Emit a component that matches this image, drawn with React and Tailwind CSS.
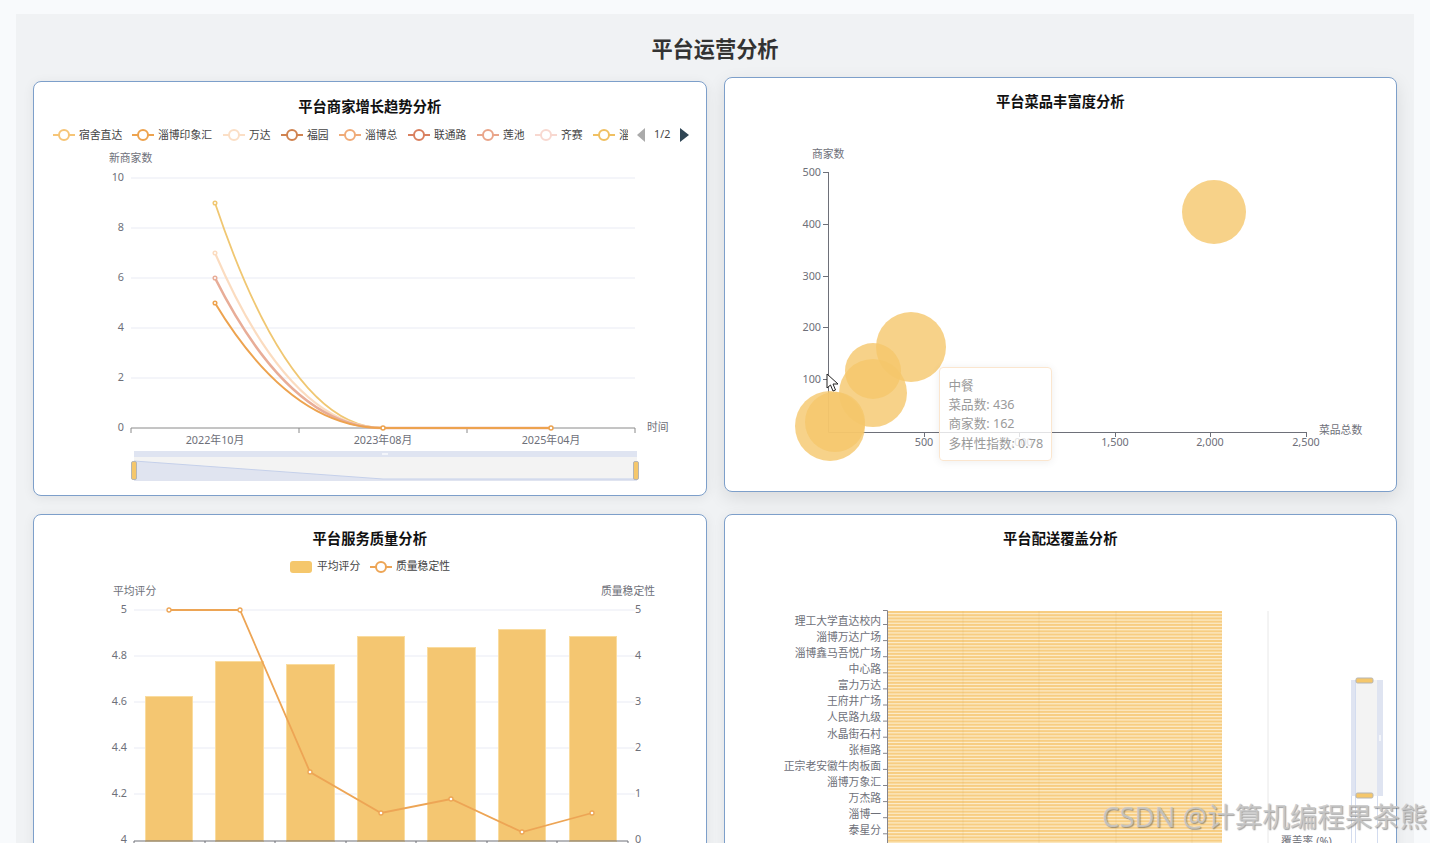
import React from "react";

const axisText = "fill-[#6e7079] text-[10.8px]";

function T({ x, y, a = "start", c = axisText, children }) {
  return (
    <text x={x} y={y - 0.7} textAnchor={a} dominantBaseline="central" className={c}>
      {children}
    </text>
  );
}

function Card({ title, className = "", titleClass = "pt-[14px]", children }) {
  return (
    <section
      className={
        "relative h-[415px] flex flex-col rounded-lg border border-[#7d9fca] bg-white shadow-[0_2px_12px_rgba(0,0,0,0.07)] " +
        className
      }
    >
      <h2 className={"h-[40px] shrink-0 text-center text-[14.3px] leading-[20px] font-bold text-[#111] " + titleClass}>
        {title}
      </h2>
      {children}
    </section>
  );
}

function LegendLine({ x, y, color, width = 2 }) {
  return (
    <g fill="none" stroke={color} strokeWidth={width}>
      <path d={`M${x} ${y}H${x + 6}M${x + 16} ${y}H${x + 22}`} />
      <circle cx={x + 11} cy={y} r="5" fill="#fff" />
    </g>
  );
}

const legend = [
  [53, "宿舍直达", "#f6c577"],
  [132, "淄博印象汇", "#eda34f"],
  [223, "万达", "#fbdfc6"],
  [281, "福园", "#d08350"],
  [339, "淄博总", "#f0ab78"],
  [408, "联通路", "#d9805f"],
  [477, "莲池", "#e9a58a"],
  [535, "齐赛", "#f8d8d0"],
];

const trend = [
  [203, "#f0c772", 1.8],
  [253, "#fbdcc0", 2.2],
  [278, "#e8ad98", 2.6],
  [303, "#eda34f", 2],
];

function TrendChart() {
  const ys = [[10, 178], [8, 228], [6, 278], [4, 328], [2, 378], [0, 428]];
  return (
    <svg viewBox="34 122 672 373" className="block w-[672px] h-[373px]">
      <defs>
        <clipPath id="legendClip">
          <rect x="590" y="125" width="38" height="20" />
        </clipPath>
      </defs>
      {legend.map(([x, label, color]) => (
        <g key={label}>
          <LegendLine x={x} y={135} color={color} />
          <T x={x + 26} y={135} c="fill-[#444] text-[10.8px]">{label}</T>
        </g>
      ))}
      <g clipPath="url(#legendClip)">
        <LegendLine x={593} y={135} color="#f0c062" />
        <T x={619} y={135} c="fill-[#444] text-[10.8px]">淄博</T>
      </g>
      <path d="M645 128V142L637 135Z" fill="#aaa" />
      <T x={654} y={134.5} c="fill-[#444] text-[10.8px]">1/2</T>
      <path d="M680 128V142L689 135Z" fill="#2f4554" />
      <T x={109} y={158}>新商家数</T>
      {ys.map(([v, y]) => (
        <g key={v}>
          {v > 0 && <path d={`M131 ${y}H635`} stroke="#e9ebf4" />}
          <T x={124} y={y - 1} a="end">{v}</T>
        </g>
      ))}
      <path d="M131 433V428H635V433M299 428V433M467 428V433" fill="none" stroke="#8a8a8a" />
      {[[215, "2022年10月"], [383, "2023年08月"], [551, "2025年04月"]].map(([x, l]) => (
        <T key={l} x={x} y={440} a="middle">{l}</T>
      ))}
      <T x={647} y={427}>时间</T>
      {trend.map(([y, color, w]) => (
        <g key={y} fill="none" stroke={color} strokeWidth={w}>
          <path d={`M215 ${y}C255 ${y + (428 - y) * 0.53} 310 428 383 428H551`} />
          <circle cx="215" cy={y} r="1.8" fill="#fff" strokeWidth="1.5" />
        </g>
      ))}
      <path d="M383 428H551" stroke="#eda34f" strokeWidth="2" />
      <circle cx="383" cy="428" r="2" fill="#fff" stroke="#eda34f" strokeWidth="1.5" />
      <circle cx="551" cy="428" r="2" fill="#fff" stroke="#eda34f" strokeWidth="1.5" />
      <rect x="134" y="451" width="503" height="6" fill="#dfe4f1" />
      <rect x="134" y="457" width="503" height="24" fill="#f3f3f3" />
      <path d="M134 461L383 479H637V481H134Z" fill="#e0e4f0" />
      <path d="M134 461L383 479H637" fill="none" stroke="#c5d0ea" />
      <rect x="131.5" y="461.5" width="5" height="18" rx="1.5" fill="#f5c76b" stroke="#b5b5b5" />
      <rect x="633.5" y="461.5" width="5" height="18" rx="1.5" fill="#f5c76b" stroke="#b5b5b5" />
      <rect x="382" y="453" width="6" height="2" fill="#f3f5fa" />
    </svg>
  );
}

function BubbleChart() {
  const bubbles = [
    [1214, 212, 32],
    [911, 347, 35],
    [873, 393, 34],
    [873, 371, 28],
    [830, 426, 35],
    [835, 422, 30],
  ];
  return (
    <svg viewBox="725 118 672 373" className="block w-[672px] h-[373px]">
      <T x={812} y={154}>商家数</T>
      {[[500, 172], [400, 224], [300, 276], [200, 327], [100, 379]].map(([v, y]) => (
        <g key={v}>
          <T x={821} y={y} a="end">{v}</T>
          <path d={`M823 ${y + 0.5}H828`} stroke="#6e7079" />
        </g>
      ))}
      <path d="M828.5 172V432.5H1306" fill="none" stroke="#6e7079" />
      {[[924, "500"], [1019, "1,000"], [1115, "1,500"], [1210, "2,000"], [1306, "2,500"]].map(([x, l]) => (
        <g key={l}>
          <path d={`M${x + 0.5} 432V437`} stroke="#6e7079" />
          <T x={x} y={442} a="middle">{l}</T>
        </g>
      ))}
      <T x={1319} y={430}>菜品总数</T>
      {bubbles.map(([x, y, r]) => (
        <circle key={x + "-" + y} cx={x} cy={y} r={r} fill="#f5c76b" fillOpacity="0.8" />
      ))}
    </svg>
  );
}

function Tooltip() {
  return (
    <div className="absolute left-[214px] top-[289px] h-[94px] w-[113px] rounded border border-[#fbe6cf] bg-white/80 pl-[9px] pt-[8px] text-[12.6px] leading-[19.2px] text-[#9a9a9a] shadow-[0_1px_8px_rgba(0,0,0,0.07)] whitespace-nowrap">
      <div>中餐</div>
      <div>菜品数: 436</div>
      <div>商家数: 162</div>
      <div>多样性指数: 0.78</div>
    </div>
  );
}

function Cursor() {
  return (
    <svg viewBox="0 0 13 20" className="absolute left-[101px] top-[295px] h-[20px] w-[13px]">
      <path d="M1 1V15L4.5 12L7 18L9.5 17L7 11H12Z" fill="#fff" stroke="#222" strokeWidth="1" strokeLinejoin="round" />
    </svg>
  );
}

function QualityChart() {
  const bars = [
    [145, 48, 696], [215, 49, 661], [286, 49, 664], [357, 48, 636],
    [427, 49, 647], [498, 48, 629], [569, 48, 636],
  ];
  const line = [[169, 610], [240, 610], [310, 772], [381, 813], [451, 799], [522, 832], [592, 813]];
  const rows = [["5", "5", 610], ["4.8", "4", 656], ["4.6", "3", 702], ["4.4", "2", 748], ["4.2", "1", 794], ["4", "0", 840]];
  return (
    <svg viewBox="34 555 672 373" className="block w-[672px] h-[373px]">
      <rect x="290" y="561" width="22" height="12" rx="3" fill="#f5c76c" />
      <T x={317} y={566} c="fill-[#444] text-[10.8px]">平均评分</T>
      <LegendLine x={370} y={567} color="#eda555" />
      <T x={396} y={566} c="fill-[#444] text-[10.8px]">质量稳定性</T>
      <T x={113} y={591}>平均评分</T>
      <T x={655} y={591} a="end">质量稳定性</T>
      {rows.map(([l, r, y]) => (
        <g key={y}>
          {y < 840 && <path d={`M134 ${y}H635`} stroke="#e9ebf4" />}
          <T x={127} y={y - 1} a="end">{l}</T>
          <T x={635} y={y - 1}>{r}</T>
        </g>
      ))}
      {bars.map(([x, w, y]) => (
        <rect key={x} x={x + 0.5} y={y + 0.5} width={w - 1} height={841 - y} fill="#f4c671" stroke="#fadc9f" />
      ))}
      <path d="M134 847V841H628V847M205 841V847M275 841V847M346 841V847M416 841V847M487 841V847M557 841V847" fill="none" stroke="#6e7079" />
      <polyline points={line.map((p) => p.join(",")).join(" ")} fill="none" stroke="#eda555" strokeWidth="1.8" />
      {line.map(([x, y]) => (
        <circle key={x} cx={x} cy={y} r="2" fill="#fff" stroke="#eda555" strokeWidth="1.3" />
      ))}
    </svg>
  );
}

const shops = [
  "理工大学直达校内", "淄博万达广场", "淄博鑫马吾悦广场", "中心路", "富力万达", "王府井广场", "人民路九级",
  "水晶街石村", "张桓路", "正宗老安徽牛肉板面", "淄博万象汇", "万杰路", "淄博一", "泰星分",
];

function CoverageChart() {
  const stripes = Array.from({ length: 73 }, (_, i) => 611 + i * 3.22);
  return (
    <svg viewBox="725 555 672 373" className="block w-[672px] h-[373px]">
      {[1268].map((x) => (
        <path key={x} d={`M${x} 611V843`} stroke="#e8e8e8" />
      ))}
      <rect x="888" y="611" width="334" height="232" fill="#fcebc8" />
      {stripes.map((y) => (
        <rect key={y} x="888" y={y} width="334" height="2" fill="#f7cd82" />
      ))}
      {[963, 1039, 1116, 1192].map((x) => (
        <path key={x} d={`M${x} 611V843`} stroke="#d9a85a" strokeOpacity="0.18" />
      ))}
      <path d="M883 610.5H887.5V843" fill="none" stroke="#85858c" />
      {shops.map((s, i) => {
        const y = 621 + i * 16.1;
        return (
          <g key={s}>
            <T x={881} y={y} a="end">{s}</T>
            <path d={`M883 ${y + 3.5}H887`} stroke="#85858c" />
          </g>
        );
      })}
      <rect x="1351" y="680" width="32" height="116" fill="#dfe4f1" />
      <rect x="1356" y="680" width="21" height="116" fill="#f3f3f3" />
      <path d="M1355.5 680V843M1377.5 796V843M1351.5 796V843M1355.5 680V796" fill="none" stroke="#d3dcef" />
      <rect x="1356" y="678" width="17" height="5" rx="1.5" fill="#f5c76b" stroke="#b5b5b5" />
      <rect x="1356" y="793" width="17" height="5" rx="1.5" fill="#f5c76b" stroke="#b5b5b5" />
      <rect x="1379" y="735" width="2" height="6" fill="#f3f5fa" />
      <T x={1281} y={841}>覆盖率 (%)</T>
    </svg>
  );
}

export default function App() {
  return (
    <div className="relative h-[843px] overflow-hidden bg-[#f8fafc] px-4 pt-[14px] font-['Noto_Sans','Noto_Sans_CJK_SC',sans-serif]">
      <main className="h-full bg-[#f0f2f4] px-[17px] pt-[18px]">
        <h1 className="mb-[13px] text-center text-[21.2px] leading-[34px] pb-[2px] font-bold text-[#333]">平台运营分析</h1>
        <div className="grid grid-cols-2 gap-x-[17px] gap-y-[18px]">
          <Card title="平台商家增长趋势分析" titleClass="pt-[15px]">
            <TrendChart />
          </Card>
          <Card title="平台菜品丰富度分析" className="-translate-y-1 shadow-[0_6px_18px_rgba(0,0,0,0.1)]">
            <BubbleChart />
            <Tooltip />
            <Cursor />
          </Card>
          <Card title="平台服务质量分析">
            <QualityChart />
          </Card>
          <Card title="平台配送覆盖分析">
            <CoverageChart />
          </Card>
        </div>
      </main>
      <div className="absolute left-[1102px] top-[797px] text-[27.5px] leading-[40px] whitespace-nowrap text-[#c8c8c8]/85 [text-shadow:1px_1px_1px_rgba(90,90,90,0.55)]">
        CSDN @计算机编程果茶熊
      </div>
    </div>
  );
}
